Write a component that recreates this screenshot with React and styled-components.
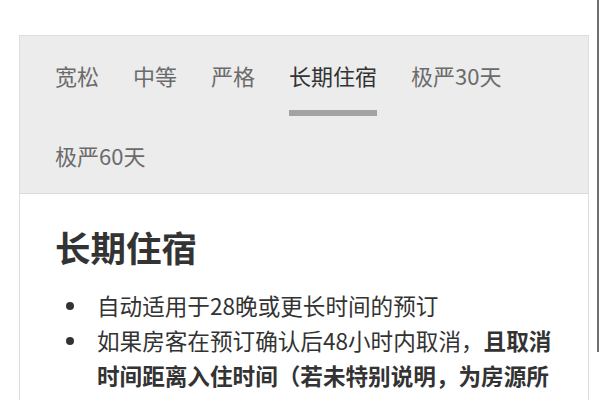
import styled, { createGlobalStyle } from "styled-components";

const GlobalStyle = createGlobalStyle`
  html, body {
    margin: 0;
    padding: 0;
    background: #ffffff;
    overflow: hidden;
  }
  body {
    font-family: "Noto Sans CJK SC", "Noto Sans", sans-serif;
    color: #333333;
  }
`

const Page = styled.div`
  width: 600px;
  height: 400px;
  padding: 35px 0 0 19px;
  box-sizing: border-box;
  position: relative;
  overflow: hidden;
`

const ScrollThumb = styled.div`
  position: absolute;
  z-index: 2;
  left: 597px;
  top: 0;
  width: 2px;
  height: 352px;
  background: #6f6f6f;
`

const Card = styled.div`
  width: 570px;
  border: 1px solid #dedede;
  box-sizing: border-box;
`

const Header = styled.div`
  background: #ececec;
  border-bottom: 1px solid #dcdcdc;
  padding: 24px 40px 3px 35px;
`

const TabList = styled.div`
  display: flex;
  flex-wrap: wrap;
  column-gap: 34px;
  row-gap: 30px;
  width: 480px;
`

const Tab = styled.div`
  position: relative;
  font-size: 22px;
  line-height: 30px;
  padding-bottom: 20px;
  color: ${(props) => (props.$active ? "#333333" : "#6b6b6b")};

  &::after {
    content: "";
    display: ${(props) => (props.$active ? "block" : "none")};
    position: absolute;
    left: 0;
    right: 0;
    bottom: -6px;
    height: 6px;
    background: #a3a3a3;
  }
`

const Body = styled.div`
  padding: 32px 30px 0 35px;
`

const Title = styled.h2`
  margin: 0;
  font-size: 35.5px;
  line-height: 42px;
  font-weight: 700;
  color: #333333;
`

const List = styled.ul`
  list-style: none;
  margin: 20px 0 0;
  padding: 0;
`

const Item = styled.li`
  display: flex;
  font-size: 22.6px;
  line-height: 35px;
  color: #333333;
`

const Dot = styled.span`
  flex: none;
  width: 8px;
  height: 8px;
  border-radius: 50%;
  background: #333333;
  margin: 13.5px 23px 0 11px;
`

const Text = styled.p`
  flex: 1;
  min-width: 0;
  margin: 0;
`

const Strong = styled.b`
  font-weight: 700;
`

const tabs = ["宽松", "中等", "严格", "长期住宿", "极严30天", "极严60天"];

export default function App() {
  return (
    <>
      <GlobalStyle />
      <Page>
        <Card>
          <Header>
            <TabList>
              {tabs.map((t) => (
                <Tab key={t} $active={t === "长期住宿"}>{t}</Tab>
              ))}
            </TabList>
          </Header>
          <Body>
            <Title>长期住宿</Title>
            <List>
              <Item>
                <Dot />
                <Text>自动适用于28晚或更长时间的预订</Text>
              </Item>
              <Item>
                <Dot />
                <Text>
                  如果房客在预订确认后48小时内取消，<Strong>且取消时间距离入住时间（若未特别说明，为房源所在地时间下午3点）不少于28天</Strong>，则可获得全额退款
                </Text>
              </Item>
            </List>
          </Body>
        </Card>
        <ScrollThumb />
      </Page>
    </>
  );
}
